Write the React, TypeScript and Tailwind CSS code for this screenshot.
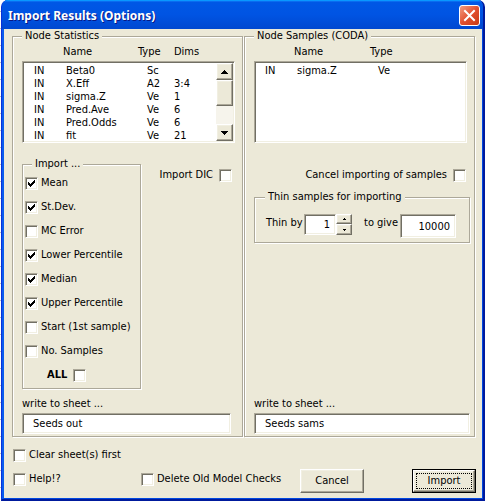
import { useId } from "react";
import type { InputHTMLAttributes, ReactNode } from "react";
import { clsx } from "clsx";

const sunken =
  "border border-t-[#aca899] border-l-[#aca899] border-r-white border-b-white bg-white shadow-[inset_1px_1px_0_#716f64,inset_-1px_-1px_0_#f1efe2]";
const raised =
  "border border-t-white border-l-white border-r-[#716f64] border-b-[#716f64] bg-[#ece9d8] shadow-[inset_-1px_-1px_0_#aca899,inset_1px_1px_0_#f1efe2]";

function Frame({
  title,
  className,
  legendClassName,
  children,
}: {
  title: string;
  className?: string;
  legendClassName?: string;
  children: ReactNode;
}) {
  return (
    <fieldset
      className={clsx(
        "min-w-0 border border-[#aca899] shadow-[1px_1px_0_white,inset_1px_1px_0_white]",
        className,
      )}
    >
      <legend className={clsx("h-[14px] bg-[#ece9d8] pr-[3px] pl-[3px]", legendClassName)}>
        {title}
      </legend>
      {children}
    </fieldset>
  );
}

function Check({
  label,
  checked = false,
  boxAfter = false,
  className,
}: {
  label: string;
  checked?: boolean;
  boxAfter?: boolean;
  className?: string;
}) {
  const id = useId();
  return (
    <div
      className={clsx(
        "flex items-center",
        boxAfter ? "flex-row-reverse justify-end gap-[6px]" : "gap-[3px]",
        className,
      )}
    >
      <span className="relative block size-[13px] shrink-0">
        <input
          id={id}
          type="checkbox"
          defaultChecked={checked}
          className={clsx("peer block size-[13px] appearance-none", sunken)}
        />
        <svg
          viewBox="0 0 7 7"
          shapeRendering="crispEdges"
          className="pointer-events-none absolute top-[3px] left-[3px] hidden size-[7px] peer-checked:block"
          aria-hidden="true"
        >
          <path d="M0 2h1v1h1v1h1v-1h1v-1h1v-1h1v-1h1v3h-1v1h-1v1h-1v1h-1v1h-1v-1h-1v-1h-1z" fill="#000" />
        </svg>
      </span>
      <label htmlFor={id} className="whitespace-nowrap">
        {label}
      </label>
    </div>
  );
}

function TextBox({ className, ...rest }: InputHTMLAttributes<HTMLInputElement>) {
  return <input type="text" className={clsx("block min-w-0 outline-none", sunken, className)} {...rest} />;
}

function Arrow({ down = false, small = false }: { down?: boolean; small?: boolean }) {
  return (
    <svg
      viewBox={small ? "0 0 3 2" : "0 0 7 4"}
      shapeRendering="crispEdges"
      className={clsx(small ? "h-[2px] w-[3px]" : "h-1 w-[7px]", down && "rotate-180")}
      aria-hidden="true"
    >
      <path d={small ? "M1 0h1v1h1v1h-3v-1h1z" : "M3 0h1v1h1v1h1v1h1v1h-7v-1h1v-1h1v-1h1z"} fill="#000" />
    </svg>
  );
}

const statistics = [
  ["IN", "Beta0", "Sc", ""],
  ["IN", "X.Eff", "A2", "3:4"],
  ["IN", "sigma.Z", "Ve", "1"],
  ["IN", "Pred.Ave", "Ve", "6"],
  ["IN", "Pred.Odds", "Ve", "6"],
  ["IN", "fit", "Ve", "21"],
];
const samples = [["IN", "sigma.Z", "Ve", ""]];

function NodeTable({ rows }: { rows: string[][] }) {
  return (
    <table className="w-full table-fixed border-collapse">
      <colgroup>
        <col className="w-8" />
        <col className="w-[81px]" />
        <col className="w-[27px]" />
        <col />
      </colgroup>
      <tbody>
        {rows.map((row) => (
          <tr key={row[1]} className="h-[13px] leading-[13px]">
            {row.map((cell, i) => (
              <td key={i} className="p-0 whitespace-nowrap">
                {cell}
              </td>
            ))}
          </tr>
        ))}
      </tbody>
    </table>
  );
}

function Scrollbar() {
  return (
    <div className="flex w-[17px] shrink-0 flex-col bg-[#f6f4ec]">
      <button type="button" aria-label="Scroll up" className={clsx("flex h-[17px] items-center justify-center", raised)}>
        <Arrow />
      </button>
      <div className={clsx("h-[26px]", raised)} />
      <button
        type="button"
        aria-label="Scroll down"
        className={clsx("mt-auto flex h-[17px] items-center justify-center", raised)}
      >
        <Arrow down />
      </button>
    </div>
  );
}

function SheetField({ value, className }: { value: string; className?: string }) {
  const id = useId();
  return (
    <div className={className}>
      <label htmlFor={id} className="mb-[2px] block">
        write to sheet ...
      </label>
      <TextBox id={id} defaultValue={value} className="h-[21px] w-full px-[10px]" />
    </div>
  );
}

export default function App() {
  return (
    <div className="flex min-h-screen flex-col bg-white bg-[repeating-linear-gradient(to_bottom,white_0,white_11px,#c0c0c0_11px,#c0c0c0_12px,white_12px,white_17px)] pl-[1px] font-['DejaVu_Sans_Condensed','DejaVu_Sans',sans-serif] text-[11px] leading-[14px] text-black">
      <div className="flex flex-1 flex-col overflow-hidden rounded-t-[7px] border-r-2 border-b-2 border-l border-r-[#001a9c] border-b-[#001a9c] border-l-[#0831d9] bg-[#0054e3]">
        <header className="flex h-[29px] items-center justify-between bg-linear-to-b from-[#0058e6] via-[#0054e3] to-[#0048d0] pr-[3px] pl-[6px] shadow-[inset_0_1px_0_#0997ff,inset_0_2px_0_#0a6cf0]">
          <h1 className="pt-[2px] font-['Noto_Sans','Open_Sans',sans-serif] text-[12px] font-bold text-white [text-shadow:1px_1px_0_#0a1883]">
            Import Results (Options)
          </h1>
          <button
            type="button"
            aria-label="Close"
            className="mt-[2px] flex size-[21px] items-center justify-center rounded-[3px] border border-white bg-linear-to-br from-[#f09a80] via-[#e2502f] to-[#c83a12]"
          >
            <svg viewBox="0 0 13 13" className="size-[13px]" aria-hidden="true">
              <path d="M2 2l9 9M11 2l-9 9" stroke="#fff" strokeWidth="2" strokeLinecap="square" />
            </svg>
          </button>
        </header>

        <main className="flex flex-1 flex-col border-r border-b border-l-2 border-r-[#0048e0] border-b-[#0048e0] border-l-[#0a5cee] bg-[#ece9d8] pr-[7px] pl-2">
          <div className="grid grid-cols-2 gap-[1px]">
            <Frame title="Node Statistics" className="pr-[7px] pb-[2px] pl-[9px]">
              <div className="flex h-[18px] items-center pl-[41px]">
                <span className="w-[75px]">Name</span>
                <span className="w-9">Type</span>
                <span>Dims</span>
              </div>
              <div className={clsx("flex h-[82px] p-[1px]", sunken)}>
                <div className="min-w-0 flex-1 pt-[1px] pl-[10px]">
                  <NodeTable rows={statistics} />
                </div>
                <Scrollbar />
              </div>
              <div className="mt-[14px] flex items-start justify-between">
                <Frame title="Import ..." className="w-[119px] pb-[1px] pl-[2px]" legendClassName="ml-[7px]">
                  <Check label="Mean" checked className="h-6" />
                  <Check label="St.Dev." checked className="h-6" />
                  <Check label="MC Error" className="h-6" />
                  <Check label="Lower Percentile" checked className="h-6" />
                  <Check label="Median" checked className="h-6" />
                  <Check label="Upper Percentile" checked className="h-6" />
                  <Check label="Start (1st sample)" className="h-6" />
                  <Check label="No. Samples" className="h-6" />
                  <Check label="ALL" boxAfter className="h-6 justify-end pl-[22px] font-bold" />
                </Frame>
                <Check label="Import DIC" boxAfter className="mt-[11px] mr-[3px]" />
              </div>
              <SheetField value="Seeds out" className="mt-2 mr-1" />
            </Frame>

            <Frame title="Node Samples (CODA)" className="flex flex-col pr-[4px] pb-[2px] pl-[9px]">
              <div className="flex h-[18px] items-center pl-[40px]">
                <span className="w-[76px]">Name</span>
                <span>Type</span>
              </div>
              <div className={clsx("mr-[3px] h-[82px] pt-[2px] pl-[10px]", sunken)}>
                <NodeTable rows={samples} />
              </div>
              <Check label="Cancel importing of samples" boxAfter className="mt-[25px] mr-1 self-end" />
              <Frame title="Thin samples for importing" className="mt-2 pb-1 pl-[11px]" legendClassName="-ml-[1px]">
                <div className="flex items-start pt-[10px]">
                  <label htmlFor="thin" className="mt-[2px] w-[38px] whitespace-nowrap">
                    Thin by
                  </label>
                  <TextBox id="thin" defaultValue="1" className="h-[21px] w-8 pr-[5px] text-right" />
                  <div className="flex w-4 flex-col">
                    <button type="button" aria-label="Increase" className={clsx("flex h-[10px] items-center justify-center", raised)}>
                      <Arrow small />
                    </button>
                    <button type="button" aria-label="Decrease" className={clsx("flex h-[11px] items-center justify-center", raised)}>
                      <Arrow small down />
                    </button>
                  </div>
                  <label htmlFor="give" className="mt-[2px] ml-3 w-9 whitespace-nowrap">
                    to give
                  </label>
                  <TextBox id="give" defaultValue="10000" className="h-[24px] w-14 pr-[5px] text-right" />
                </div>
              </Frame>
              <SheetField value="Seeds sams" className="mt-auto" />
            </Frame>
          </div>

          <div className="flex pt-[11px] pl-[1px]">
            <Check label="Clear sheet(s) first" />
          </div>
          <div className="-mr-[1px] flex items-start pt-[7px] pl-[1px]">
            <Check label="Help!?" className="mt-[3px] w-32" />
            <Check label="Delete Old Model Checks" className="mt-[3px]" />
            <div className="ml-auto flex gap-12">
              <button type="button" className={clsx("h-6 w-16", raised)}>
                Cancel
              </button>
              <button type="button" className="h-6 w-16 border border-black">
                <span className={clsx("flex h-full p-[2px]", raised)}>
                  <span className="flex flex-1 items-center justify-center border border-dotted border-black">Import</span>
                </span>
              </button>
            </div>
          </div>
        </main>
      </div>
    </div>
  );
}
